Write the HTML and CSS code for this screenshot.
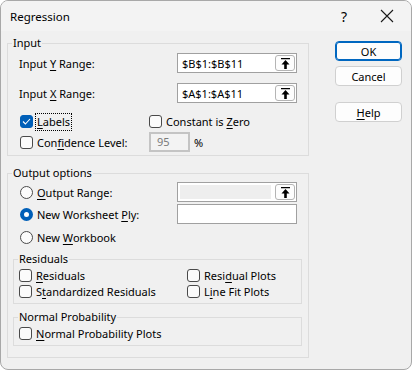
FILE: index.html
```html
<!DOCTYPE html>
<html>
<head>
<meta charset="utf-8">
<title>Regression</title>
<link rel="stylesheet" href="styles.css">
</head>
<body>
<div class="dlg">
	<div class="titlebar">
		<span class="title">Regression</span>
		<span class="help-q">?</span>
		<svg class="close" width="14" height="14" viewBox="0 0 14 14"><path d="M1 1L13 13M13 1L1 13" stroke="#1a1a1a" stroke-width="1.1" fill="none"/></svg>
	</div>
	<div class="corps">
		<div class="left">
			<fieldset class="grp grp-input">
				<legend>Input</legend>
				<div class="row range">
					<span class="lbl"><span>Input <u>Y</u> Range:</span></span>
					<span class="ref"><span class="txt">$B$1:$B$11</span><span class="pick"><svg width="9" height="11" viewBox="0 0 9 11"><path d="M0 0.5H9" stroke="#000" stroke-width="1.4"/><path d="M4.5 2L0.5 6.5H3.2V11H5.8V6.5H8.5Z" fill="#000"/></svg></span></span>
				</div>
				<div class="row range r2">
					<span class="lbl"><span>Input <u>X</u> Range:</span></span>
					<span class="ref"><span class="txt">$A$1:$A$11</span><span class="pick"><svg width="9" height="11" viewBox="0 0 9 11"><path d="M0 0.5H9" stroke="#000" stroke-width="1.4"/><path d="M4.5 2L0.5 6.5H3.2V11H5.8V6.5H8.5Z" fill="#000"/></svg></span></span>
				</div>
				<div class="row checks">
					<span class="opt col1"><span class="cb on"><svg width="9" height="7" viewBox="0 0 9 7"><path d="M1 3.5L3.4 6L8 1" stroke="#fff" stroke-width="1.1" fill="none"/></svg></span><span class="focus"><u>L</u>abels</span></span>
					<span class="opt"><span class="cb"></span><span>Constant is <u>Z</u>ero</span></span>
				</div>
				<div class="row conf">
					<span class="opt col1"><span class="cb"></span><span>Con<u>f</u>idence Level:</span></span>
					<span class="pct"><span class="num">95</span></span>
					<span class="sym">%</span>
				</div>
			</fieldset>

			<fieldset class="grp grp-output">
				<legend>Output options</legend>
				<div class="row out">
					<span class="lbl"><span class="rb"></span><span><u>O</u>utput Range:</span></span>
					<span class="ref off"><span class="txt"></span><span class="pick"><svg width="9" height="11" viewBox="0 0 9 11"><path d="M0 0.5H9" stroke="#000" stroke-width="1.4"/><path d="M4.5 2L0.5 6.5H3.2V11H5.8V6.5H8.5Z" fill="#000"/></svg></span></span>
				</div>
				<div class="row out o2">
					<span class="lbl"><span class="rb on"></span><span>New Worksheet <u>P</u>ly:</span></span>
					<span class="ref"><span class="txt"></span></span>
				</div>
				<div class="row out o3">
					<span class="lbl"><span class="rb"></span><span>New <u>W</u>orkbook</span></span>
				</div>

				<fieldset class="grp sub grp-resid">
					<legend>Residuals</legend>
					<div class="row two">
						<span class="opt c1"><span class="cb"></span><span><u>R</u>esiduals</span></span>
						<span class="opt"><span class="cb"></span><span>Resi<u>d</u>ual Plots</span></span>
					</div>
					<div class="row two">
						<span class="opt c1"><span class="cb"></span><span>S<u>t</u>andardized Residuals</span></span>
						<span class="opt"><span class="cb"></span><span>L<u>i</u>ne Fit Plots</span></span>
					</div>
				</fieldset>

				<fieldset class="grp sub grp-norm">
					<legend>Normal Probability</legend>
					<div class="row two">
						<span class="opt"><span class="cb"></span><span><u>N</u>ormal Probability Plots</span></span>
					</div>
				</fieldset>
			</fieldset>
		</div>
		<div class="right">
			<button class="btn btn-ok">OK</button>
			<button class="btn">Cancel</button>
			<button class="btn btn-help"><u>H</u>elp</button>
		</div>
	</div>
</div>
</body>
</html>
```

FILE: styles.css
```css
html,body,fieldset,legend,button {
	margin:0;
	padding:0;
}
body {
	background:#ffffff;
	font-family: "Segoe UI", "Noto Sans", "Open Sans", sans-serif;
	font-size:11px;
	color:#000;
}
u {
	text-decoration-thickness:1px;
	text-underline-offset:2px;
}
.dlg {
	width:412px;
	height:370px;
	box-sizing:border-box;
	border:1px solid #a8a8a8;
	border-radius:8px;
	background:#f0f0f0;
	overflow:hidden;
}
.titlebar {
	height:30px;
	background:#f3f3f3;
	display:flex;
	align-items:center;
	padding-left:9px;
}
.title {
	flex:1;
	font-size:11.5px;
}
.help-q {
	font-size:14px;
	margin-right:33px;
}
.close {
	margin-right:17px;
}
.corps {
	display:flex;
	padding-left:6px;
}
.left {
	width:302px;
}
.grp {
	border:1px solid #dcdcdc;
	padding:0 0 3px 0;
	margin-top:4px;
}
.grp legend {
	margin-left:4px;
	padding:0 1px;
	line-height:16px;
	height:16px;
}
.row {
	display:flex;
	align-items:center;
}
.range {
	height:20px;
	margin-top:2px;
	padding-left:11px;
}
.range.r2 {
	margin-top:10px;
}
.lbl {
	width:158px;
	display:flex;
	align-items:center;
}
.ref {
	width:120px;
	height:20px;
	box-sizing:border-box;
	border:1px solid #a0a0a0;
	background:#fff;
	display:flex;
	align-items:center;
	padding:0 1px 0 4px;
}
.ref .txt {
	flex:1;
}
.ref.off .txt {
	align-self:stretch;
	margin:2px 4px 2px -2px;
	background:#eeeeee;
}
.pick {
	width:20px;
	height:16px;
	box-sizing:border-box;
	border:1px solid #b4b4b4;
	border-radius:3px;
	background:#fdfdfd;
	display:flex;
	align-items:center;
	justify-content:center;
}
.checks {
	height:17px;
	margin-top:10px;
	padding-left:12px;
}
.conf {
	height:20px;
	margin-top:2px;
	padding-left:12px;
}
.col1 {
	width:129px;
}
.opt {
	display:flex;
	align-items:center;
}
.cb {
	width:13px;
	height:13px;
	box-sizing:border-box;
	border:1px solid #4a4a4a;
	border-radius:3px;
	background:#fbfbfb;
	margin-right:4px;
	display:flex;
	align-items:center;
	justify-content:center;
}
.cb.on {
	background:#005fb8;
	border-color:#005fb8;
}
.focus {
	outline:1px dotted #000;
	outline-offset:1px;
	line-height:14px;
}
.pct {
	width:41px;
	height:20px;
	box-sizing:border-box;
	border:2px solid #c4c4c4;
	background:#f3f3f3;
	color:#7a7a7a;
	padding-left:6px;
	line-height:16px;
}
.sym {
	margin-left:4px;
}
.grp-output {
	margin-top:9px;
	padding-bottom:11px;
}
.out {
	padding-left:12px;
	height:20px;
	margin-top:1px;
}
.out.o2 {
	margin-top:2px;
}
.out.o3 {
	height:18px;
	margin-top:4px;
}
.out .lbl {
	width:157px;
}
.rb {
	width:13px;
	height:13px;
	box-sizing:border-box;
	border:1px solid #4a4a4a;
	border-radius:50%;
	background:#fbfbfb;
	margin-right:4px;
}
.rb.on {
	border:4px solid #005fb8;
	background:#fff;
}
.sub {
	margin:5px 6px 0 5px;
	padding-bottom:3px;
}
.grp-resid .two {
	height:16.5px;
}
.grp-norm {
	margin-top:5px;
}
.two {
	height:17px;
	padding-left:5px;
}
.c1 {
	width:168px;
}
.right {
	margin-left:26px;
	display:flex;
	flex-direction:column;
	padding-top:10px;
}
.btn {
	width:67px;
	height:20px;
	box-sizing:border-box;
	border:1px solid #d0d0d0;
	border-radius:4px;
	background:#fdfdfd;
	font-family: "Segoe UI", "Noto Sans", "Open Sans", sans-serif;
	font-size:11px;
	color:#000;
	margin-bottom:5px;
}
.btn-ok {
	border:1px solid #0067c0;
	box-shadow:inset 0 0 0 1px #0067c0;
}
.btn-help {
	margin-top:11px;
}
```
